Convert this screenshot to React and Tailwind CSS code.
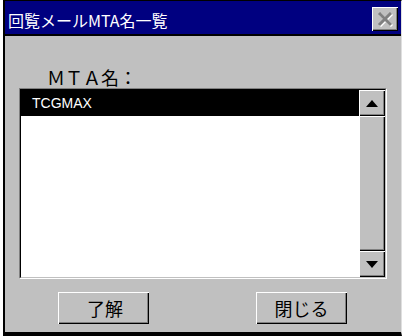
const raised =
  "bg-[#c0c0c0] shadow-[inset_1px_1px_0_#ffffff,inset_-1px_-1px_0_#000000,inset_-2px_-2px_0_#808080]";

function Arrow({ up }) {
  return (
    <svg width="12" height="7" viewBox="0 0 12 7">
      <polygon points={up ? "6,0 12,7 0,7" : "0,0 12,0 6,7"} fill="#000" />
    </svg>
  );
}

function CloseIcon() {
  return (
    <svg width="16" height="15" viewBox="0 0 16 15">
      <path d="M3 2 L15 14 M15 2 L3 14" stroke="#ffffff" strokeWidth="3" />
      <path d="M2 1 L14 13 M14 1 L2 13" stroke="#808080" strokeWidth="3" />
    </svg>
  );
}

export default function App() {
  const jp = { fontFamily: '"Noto Sans CJK JP", "Noto Sans", sans-serif' };
  return (
    <div className="flex h-[336px] w-[404px] bg-white">
      <div className="ml-[3px] flex h-[336px] w-[399px] flex-col border-b-4 border-l-2 border-r border-t border-black border-r-[#dfdfdf] bg-[#c0c0c0]">
        {/* title bar */}
        <div className="flex h-[35px] shrink-0 items-start justify-between border-b-2 border-black bg-[#000080] pl-[3px] pr-[3px]">
          <span className="pt-[7px] text-[16px] leading-[24px] text-white" style={jp}>
            回覧メールMTA名一覧
          </span>
          <button className={`mt-[6px] flex h-[24px] w-[26px] items-center justify-center ${raised}`}>
            <CloseIcon />
          </button>
        </div>

        {/* body */}
        <div className="flex flex-1 flex-col">
          <div className="mt-[30px] pl-[42px] text-[18px] leading-[22px] text-black" style={jp}>
            ＭＴＡ名：
          </div>
          <div className="ml-[14px] h-[191px] w-[368px] border border-[#808080] border-b-white border-r-white">
            <div className="flex h-full w-full border border-black border-b-[#c0c0c0] border-r-[#c0c0c0] bg-white">
              <div className="flex-1">
                <div
                  className="flex h-[26px] items-center bg-black pl-[11px] text-[14px] text-white"
                  style={{ fontFamily: '"Liberation Sans", Arial, sans-serif' }}
                >
                  TCGMAX
                </div>
              </div>
              <div className="flex w-[26px] flex-col">
                <div className={`flex h-[26px] items-center justify-center ${raised}`}>
                  <Arrow up />
                </div>
                <div className={`flex-1 ${raised}`} />
                <div className={`flex h-[26px] items-center justify-center ${raised}`}>
                  <Arrow />
                </div>
              </div>
            </div>
          </div>
          <div className="mt-[13px] flex pl-[53px]">
            <button
              className={`flex h-[32px] w-[91px] items-center justify-center pl-[3px] text-[18px] text-black ${raised}`}
              style={jp}
            >
              了解
            </button>
            <button
              className={`ml-[107px] flex h-[32px] w-[91px] items-center justify-center text-[18px] text-black ${raised}`}
              style={jp}
            >
              閉じる
            </button>
          </div>
        </div>
      </div>
    </div>
  );
}
